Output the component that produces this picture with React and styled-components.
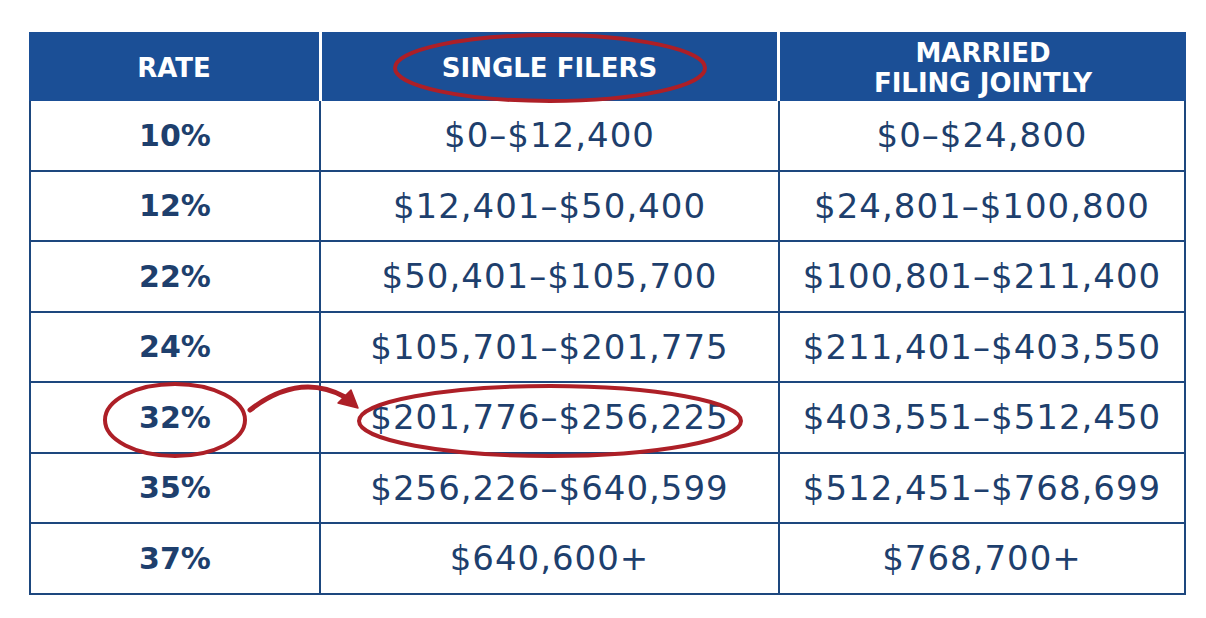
import styled, { createGlobalStyle } from "styled-components";

const NAVY = "#1d477e";
const HEAD_BLUE = "#1b4f96";
const TEXT = "#1e3f6d";
const RED = "#ad1f27";

const brackets = [
  { rate: "10%", single: "$0–$12,400", joint: "$0–$24,800" },
  { rate: "12%", single: "$12,401–$50,400", joint: "$24,801–$100,800" },
  { rate: "22%", single: "$50,401–$105,700", joint: "$100,801–$211,400" },
  { rate: "24%", single: "$105,701–$201,775", joint: "$211,401–$403,550" },
  { rate: "32%", single: "$201,776–$256,225", joint: "$403,551–$512,450" },
  { rate: "35%", single: "$256,226–$640,599", joint: "$512,451–$768,699" },
  { rate: "37%", single: "$640,600+", joint: "$768,700+" },
];

function App() {
  return (
    <>
      <GlobalStyle />
      <Page>
        <Frame>
          <HeaderRow>
            <HeadCell>RATE</HeadCell>
            <HeadCell>SINGLE FILERS</HeadCell>
            <HeadCell>
              MARRIED
              <br />
              FILING JOINTLY
            </HeadCell>
          </HeaderRow>
          <Body>
            {brackets.map((b) => (
              <Row key={b.rate}>
                <RateCell>{b.rate}</RateCell>
                <AmountCell>{b.single}</AmountCell>
                <AmountCell>{b.joint}</AmountCell>
              </Row>
            ))}
          </Body>
          <Marks viewBox="0 0 1157 562" aria-hidden="true">
            <ellipse cx="521" cy="36" rx="155" ry="33" />
            <ellipse cx="146" cy="388" rx="70" ry="36" />
            <ellipse cx="521" cy="389" rx="191" ry="35" />
            <path d="M221 378 Q270 340 316 365" />
            <Head points="329,376 309,371 322,358" />
          </Marks>
        </Frame>
      </Page>
    </>
  );
}

const GlobalStyle = createGlobalStyle`
  html, body {
    margin: 0;
    background: #ffffff;
  }
  * {
    box-sizing: border-box;
  }
`;

const Page = styled.div`
  width: 1206px;
  height: 618px;
  padding: 32px 0 0 29px;
  font-family: "DejaVu Sans", "Liberation Sans", sans-serif;
`;

const Frame = styled.div`
  position: relative;
  width: 1157px;
`;

const HeaderRow = styled.div`
  display: grid;
  grid-template-columns: 290px 455px 406px;
  column-gap: 3px;
  height: 69px;
`;

const HeadCell = styled.div`
  display: flex;
  align-items: center;
  justify-content: center;
  text-align: center;
  background: ${HEAD_BLUE};
  color: #ffffff;
  font-weight: 700;
  font-size: 26px;
  line-height: 30px;
  padding-top: 2px;
`;

const Body = styled.div`
  display: grid;
  row-gap: 2px;
  background: ${NAVY};
  border: 2px solid ${NAVY};
  border-top: none;
`;

const Row = styled.div`
  display: grid;
  grid-template-columns: 288px 457px 404px;
  column-gap: 2px;
  height: 68.5px;
`;

const Cell = styled.div`
  display: flex;
  align-items: center;
  justify-content: center;
  background: #ffffff;
  color: ${TEXT};
`;

const RateCell = styled(Cell)`
  font-weight: 700;
  font-size: 30px;
`;

const AmountCell = styled(Cell)`
  font-size: 34px;
  letter-spacing: 1px;
`;

const Marks = styled.svg`
  position: absolute;
  left: 0;
  top: 0;
  width: 1157px;
  height: 562px;
  overflow: visible;
  pointer-events: none;
  fill: none;
  stroke: ${RED};
  stroke-width: 4;
  stroke-linecap: round;

  path {
    stroke-width: 5;
  }
`;

const Head = styled.polygon`
  fill: ${RED};
  stroke: ${RED};
  stroke-width: 1.5;
  stroke-linejoin: round;
`;

export default App;
